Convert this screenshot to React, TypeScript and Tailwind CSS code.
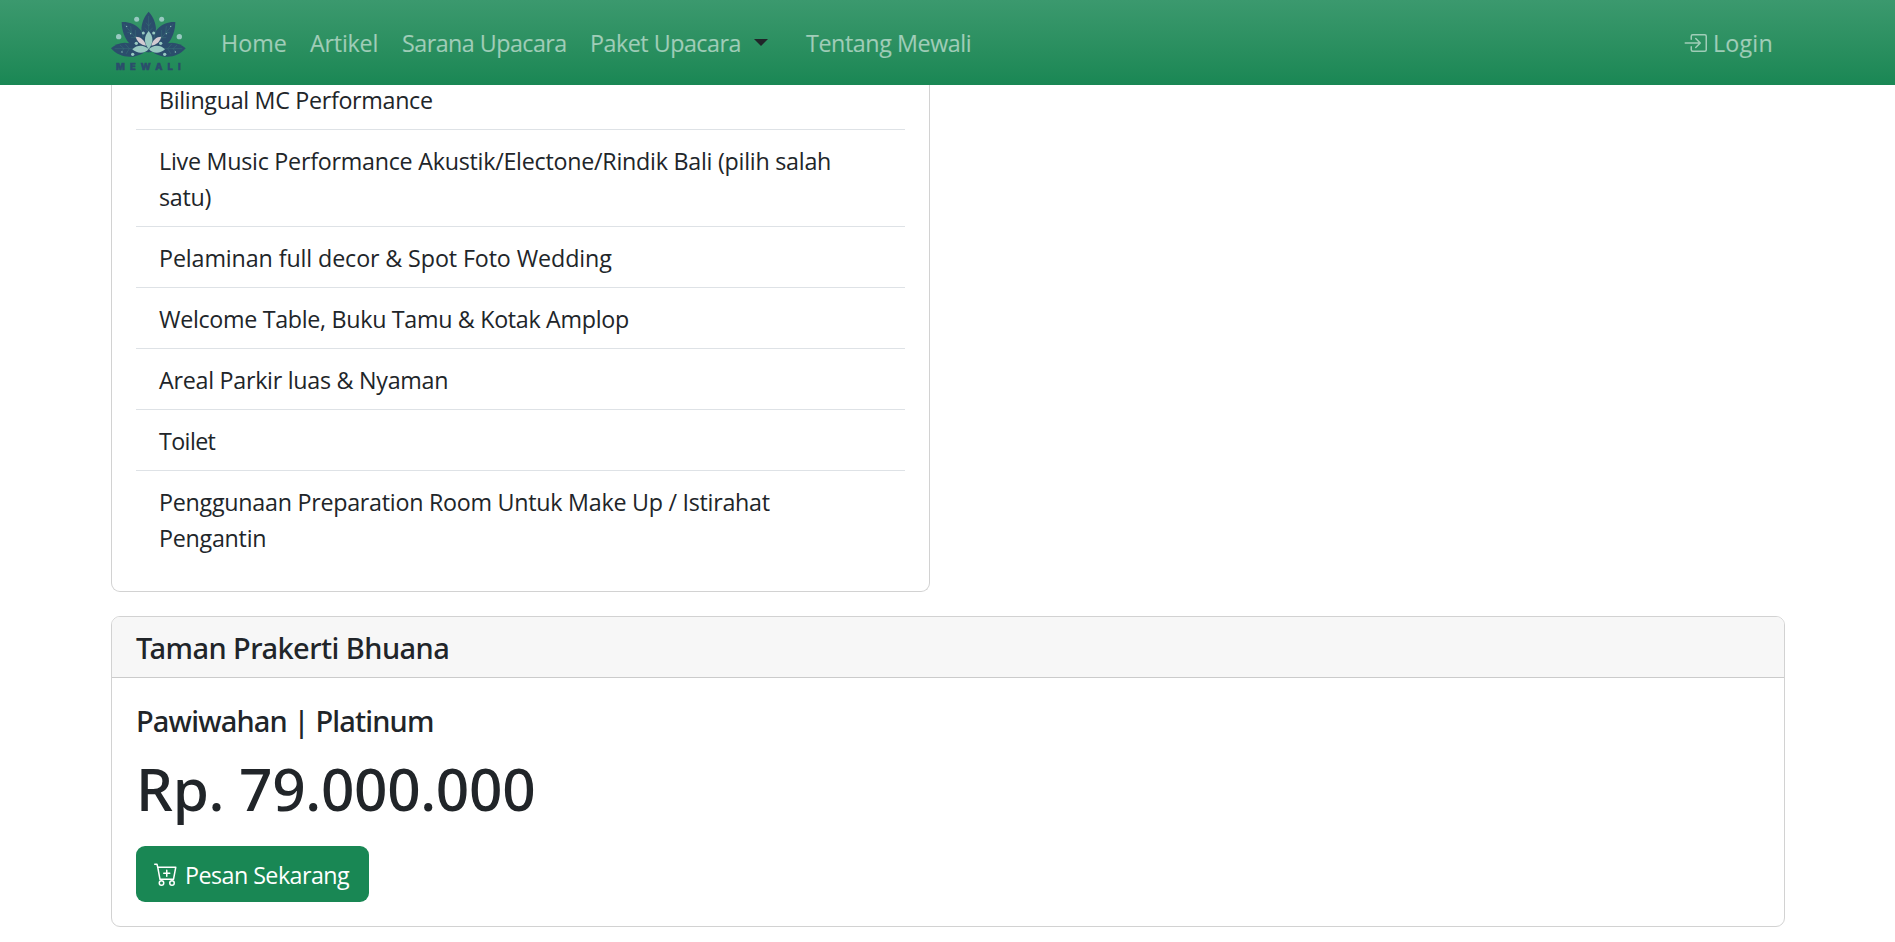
import { BsBoxArrowInRight, BsCartPlus } from "react-icons/bs";

function Logo() {
  return (
    <svg viewBox="30 30 231 186" className="h-[62px] w-[77px] shrink-0" aria-label="Mewali">
      <g fill="#2b4d6c">
        <path d="M33 145C58 121 98 120 132 158C98 178 58 174 33 145Z" />
        <path d="M257 145C232 121 192 120 160 158C194 178 232 174 257 145Z" />
        <path d="M65 66C106 64 140 92 144 157C98 154 66 118 65 66Z" />
        <path d="M226 66C185 64 152 92 148 157C194 154 225 118 226 66Z" />
        <path d="M146 35C174 66 177 112 146 158C115 112 118 66 146 35Z" />
      </g>
      <g stroke="#3f7f7c" strokeWidth="1.4" fill="none" opacity="0.8">
        <path d="M146 48V100M138 68L146 78L154 68M134 84L146 95L158 84" />
        <path d="M72 73L120 128M82 98L94 98L92 78M92 113L106 113L106 90" />
        <path d="M219 73L172 128M209 98L197 98L199 78M199 113L185 113L185 90" />
        <path d="M44 146H100M60 135L72 146L62 157M76 132L88 146L78 162" />
        <path d="M247 146H192M231 135L219 146L229 157M215 132L203 146L213 162" />
        <path d="M121 78L130 114M171 78L162 114" />
      </g>
      <g fill="#d3cbd2">
        <path d="M107 110C122 110 134 120 138 137C122 134 112 126 107 110Z" />
        <path d="M184 110C169 110 157 120 154 137C170 134 179 126 184 110Z" />
      </g>
      <g fill="#98c9c1">
        <path d="M146 93C161 110 161 128 146 148C131 128 131 110 146 93Z" />
        <path d="M97 148C112 132 134 135 146 147C136 161 112 163 97 148Z" />
        <path d="M195 148C180 132 158 135 147 147C157 161 180 163 195 148Z" />
        <circle cx="110" cy="58" r="7.5" />
        <circle cx="185" cy="58" r="7.5" />
        <circle cx="56" cy="110" r="8" />
        <circle cx="238" cy="110" r="8" />
        <circle cx="109" cy="130" r="5" />
        <circle cx="182" cy="130" r="5" />
        <circle cx="98" cy="163" r="5" />
        <circle cx="194" cy="163" r="5" />
        <circle cx="130" cy="99" r="4.5" />
        <circle cx="161" cy="99" r="4.5" />
        <circle cx="80" cy="79" r="2" />
        <circle cx="212" cy="79" r="2" />
        <circle cx="92" cy="101" r="2" />
        <circle cx="199" cy="101" r="2" />
        <circle cx="66" cy="156" r="2" />
        <circle cx="226" cy="156" r="2" />
      </g>
      <text
        x="48"
        y="209"
        textLength="194"
        fill="#2b4d6c"
        stroke="#2b4d6c"
        strokeWidth="1.6"
        className="font-['Inter',sans-serif] text-[28px] font-extrabold"
      >
        MEWALI
      </text>
    </svg>
  );
}

const features = [
  { text: "Bilingual MC Performance", tracking: "tracking-[-0.31px]" },
  { text: "Live Music Performance Akustik/Electone/Rindik Bali (pilih salah satu)", tracking: "tracking-[-0.25px]" },
  { text: "Pelaminan full decor & Spot Foto Wedding", tracking: "tracking-[-0.11px]" },
  { text: "Welcome Table, Buku Tamu & Kotak Amplop", tracking: "tracking-[-0.31px]" },
  { text: "Areal Parkir luas & Nyaman", tracking: "tracking-[-0.27px]" },
  { text: "Toilet", tracking: "tracking-[-0.6px]" },
  { text: "Penggunaan Preparation Room Untuk Make Up / Istirahat Pengantin", tracking: "tracking-[-0.26px]" },
];

function Navbar() {
  return (
    <nav className="relative z-10 flex h-[85px] items-center bg-linear-to-b from-[#3b996e] to-[#198754] pr-[111px] pl-[110px] text-white/55">
      <a href="#" className="mr-[34px] -mt-[3px]">
        <Logo />
      </a>
      <div className="flex flex-1 items-center pt-px whitespace-nowrap">
        <a href="#" className="w-[89px]">Home</a>
        <a href="#" className="w-[92px] tracking-[-0.2px]">Artikel</a>
        <a href="#" className="w-[188px] tracking-[-0.52px]">Sarana Upacara</a>
        <a href="#" className="flex w-[216px] items-center tracking-[-0.48px]">
          <span className="w-[164px]">Paket Upacara</span>
          <span className="-mt-px border-x-[7px] border-t-[7px] border-x-transparent border-t-[#212529]" />
        </a>
        <a href="#" className="tracking-[-0.41px]">Tentang Mewali</a>
      </div>
      <a href="#" className="flex w-[101px] items-center gap-[6px] tracking-[0.2px]">
        <BsBoxArrowInRight className="size-6" />
        <span className="pt-px">Login</span>
      </a>
    </nav>
  );
}

export default function App() {
  return (
    <div className="h-[942px] overflow-hidden bg-white font-['Open_Sans','Noto_Sans',sans-serif] text-[23.28px] leading-9 text-[#212529]">
      <Navbar />
      <main className="flex flex-col gap-6 pr-[110px] pl-[111px]">
        <section className="w-[819px] rounded-b-[9px] border border-t-0 border-[#d2d2d2] px-6 pb-6">
          <ul className="-mt-4 divide-y divide-[#dee2e6]">
            {features.map((f) => (
              <li key={f.text} className={`pt-[13px] pr-6 pb-[11px] pl-[23px] ${f.tracking}`}>
                {f.text}
              </li>
            ))}
          </ul>
        </section>
        <section className="overflow-hidden rounded-[9px] border border-[#d2d2d2]">
          <h5 className="border-b border-[#cbcbcb] bg-[#f7f7f7] px-6 pt-[13px] pb-[11px] font-['Noto_Sans'] text-[29px] leading-9 font-medium tracking-[-0.54px]">
            Taman Prakerti Bhuana
          </h5>
          <div className="px-6 pt-[25px] pb-6">
            <h5 className="mb-[13px] font-['Noto_Sans'] text-[29px] leading-9 font-medium tracking-[-0.84px]">Pawiwahan | Platinum</h5>
            <h1 className="mb-[22px] font-['Noto_Sans'] text-[58.5px] leading-[72px] font-medium tracking-[-0.33px]">Rp. 79.000.000</h1>
            <button className="flex h-14 w-[233px] items-center gap-[7px] rounded-[9px] bg-[#198754] pl-[18px] tracking-[-0.54px] whitespace-nowrap text-white">
              <BsCartPlus className="size-6" />
              <span className="pt-0.5">Pesan Sekarang</span>
            </button>
          </div>
        </section>
      </main>
    </div>
  );
}
